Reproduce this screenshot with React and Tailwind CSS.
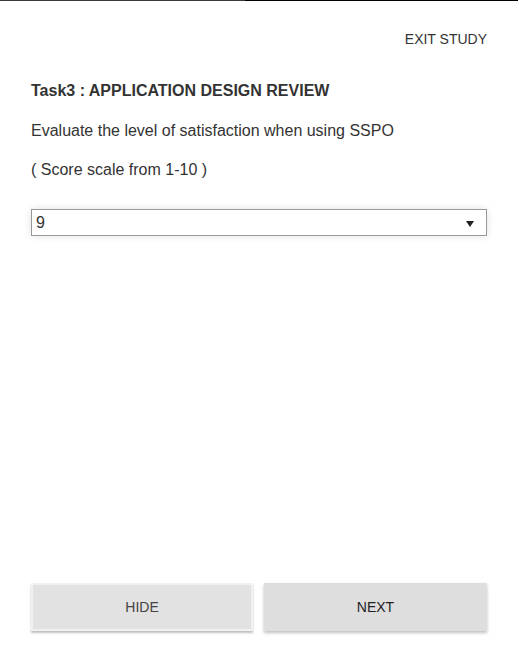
import React, { useState } from "react";

const App = () => {
  const [score, setScore] = useState("9");

  return (
    <div className="min-h-[651px] w-[519px] bg-white flex flex-col font-['Liberation_Sans',Arial,sans-serif] text-[#333]">
      <div className="flex h-px">
        <div className="w-[245px] bg-[#3a3a3a]" />
        <div className="w-[273px] bg-black" />
      </div>

      <div className="flex flex-col flex-1 pl-[31px] pr-[32px]">
        <div className="flex justify-end pt-[30px]">
          <button className="text-[14px] leading-[17px] uppercase">Exit Study</button>
        </div>

        <h2 className="mt-[33px] text-[16px] leading-[19px] font-bold">Task3 : APPLICATION DESIGN REVIEW</h2>
        <p className="mt-[21px] text-[16px] leading-[19px]">Evaluate the level of satisfaction when using SSPO</p>
        <p className="mt-[20px] text-[16px] leading-[19px]">( Score scale from 1-10 )</p>

        <div className="relative mt-[30px] h-[27px] border border-[#999] bg-white shadow-[0_0_10px_-1px_rgba(0,0,0,0.15)]">
          <select
            value={score}
            onChange={(e) => setScore(e.target.value)}
            className="appearance-none w-full h-full pl-[4px] text-[16px] bg-transparent outline-none"
          >
            {Array.from({ length: 10 }, (_, i) => (
              <option key={i} value={String(i + 1)}>
                {i + 1}
              </option>
            ))}
          </select>
          <span className="pointer-events-none absolute right-[12px] top-[11px] w-0 h-0 border-l-[4px] border-r-[4px] border-t-[6px] border-l-transparent border-r-transparent border-t-[#222]" />
        </div>

        <div className="flex-1" />

        <div className="flex gap-[11px] mb-[20px]">
          <button className="w-[222px] h-[48px] bg-[#e2e2e2] border-2 border-[#f1f1f1] text-[14px] text-[#444] shadow-[0_2px_2px_rgba(0,0,0,0.25)]">
            HIDE
          </button>
          <button className="flex-1 h-[48px] bg-[#dedede] text-[14px] text-[#222] shadow-[0_2px_3px_rgba(0,0,0,0.25)]">
            NEXT
          </button>
        </div>
      </div>
    </div>
  );
};

export default App;
